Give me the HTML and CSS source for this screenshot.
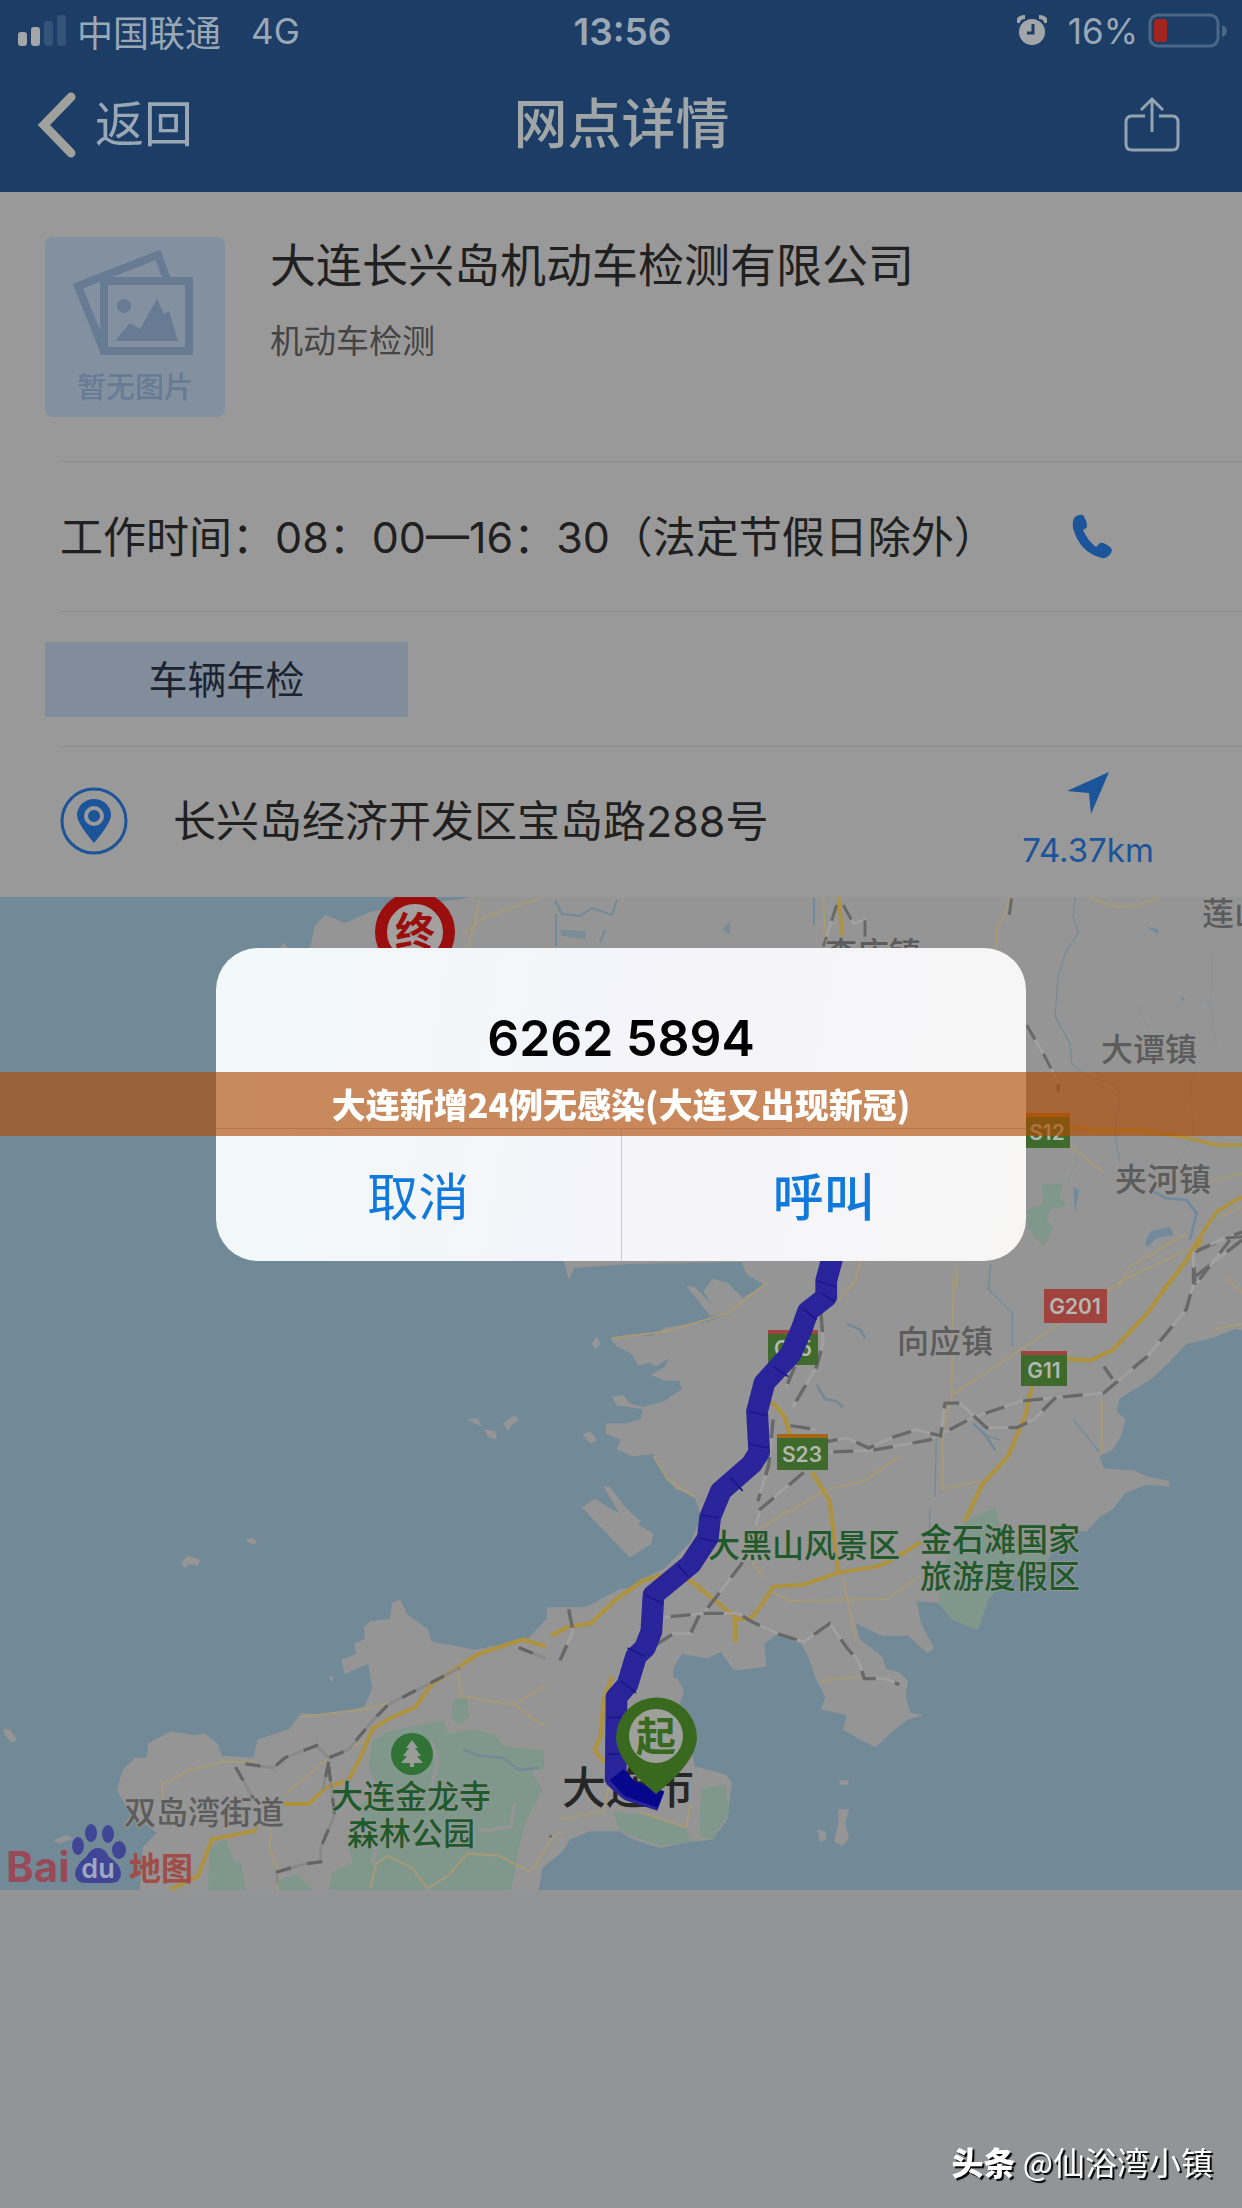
FILE: index.html
```html
<!DOCTYPE html>
<html lang="zh-CN">
<head>
<meta charset="utf-8">
<meta name="viewport" content="width=device-width, initial-scale=1">
<title>网点详情</title>
<link rel="stylesheet" href="styles.css">
</head>
<body>
<header class="header">
  <div class="status">
    <div class="status-side">
      <svg class="signal" viewBox="0 0 50 32" width="50" height="32" aria-hidden="true">
        <rect x="1" y="17" width="9" height="14" rx="3" fill="#a3a6a8"/>
        <rect x="14" y="12" width="9" height="19" rx="3" fill="#a3a6a8"/>
        <rect x="27" y="6" width="9" height="25" rx="3" fill="#345379"/>
        <rect x="40" y="0" width="9" height="31" rx="3" fill="#345379"/>
      </svg>
      <span class="carrier">中国联通</span>
      <span>4G</span>
    </div>
    <time class="clock">13:56</time>
    <div class="status-side status-right">
      <svg viewBox="0 0 30 32" width="30" height="32" aria-hidden="true">
        <circle cx="15" cy="17" r="13" fill="#a3a6a8"/>
        <path d="M1 8Q1 2 8 2M22 2Q29 2 29 8" fill="none" stroke="#a3a6a8" stroke-width="4"/>
        <path d="M16 9V18H10" fill="none" stroke="#1c3d66" stroke-width="3"/>
      </svg>
      <span>16%</span>
      <svg class="battery" viewBox="0 0 80 36" width="80" height="36" aria-hidden="true">
        <rect x="2" y="2" width="68" height="31" rx="8" fill="none" stroke="#4b6686" stroke-width="3"/>
        <rect x="6" y="6" width="13" height="23" rx="3" fill="#a4241f"/>
        <path d="M74 12Q79 14 79 18T74 24Z" fill="#4b6686"/>
      </svg>
    </div>
  </div>
  <nav class="nav">
    <button class="back" type="button">
      <svg viewBox="0 0 40 66" width="40" height="66" aria-hidden="true"><path d="M34 5L7 33L34 61" fill="none" stroke="#a0a09c" stroke-width="9" stroke-linecap="round" stroke-linejoin="miter"/></svg>
      <span>返回</span>
    </button>
    <h1 class="nav-title">网点详情</h1>
    <button class="share" type="button" aria-label="分享">
      <svg viewBox="0 0 56 58" width="56" height="58" aria-hidden="true"><path d="M21 20H8Q2 20 2 26V48Q2 54 8 54H48Q54 54 54 48V26Q54 20 48 20H35M28 36V3M17 14L28 3L39 14" fill="none" stroke="#93a1b1" stroke-width="3"/></svg>
    </button>
  </nav>
</header>

<main>
  <section class="summary">
    <div class="thumb">
      <svg viewBox="0 0 124 130" width="124" height="130" aria-hidden="true">
        <path d="M31 114L5 49L85 18L94 43" fill="none" stroke="#687b94" stroke-width="8"/>
        <rect x="31" y="44" width="85" height="70" fill="none" stroke="#687b94" stroke-width="8"/>
        <circle cx="51" cy="69" r="7" fill="#687b94"/>
        <path d="M42 104L57 86L67 92L84 62L91 77L96 74L105 104Z" fill="#687b94"/>
      </svg>
      <span>暂无图片</span>
    </div>
    <div class="summary-text">
      <h2>大连长兴岛机动车检测有限公司</h2>
      <p>机动车检测</p>
    </div>
  </section>

  <section class="row hours">
    <p class="row-text">工作时间：08：00—16：30（法定节假日除外）</p>
    <a class="action" href="tel:62625894" aria-label="呼叫">
      <svg viewBox="0 0 40 46" width="40" height="46" aria-hidden="true"><path d="M3 3Q7 0 11 1Q15 7 15 12Q15 14 11 16Q16 27 24 33L28 29Q31 28 38 33Q41 35 39 39Q35 45 30 44Q8 39 1 14Q0 6 3 3Z" fill="#1c5499"/></svg>
    </a>
  </section>

  <section class="row tags">
    <span class="tag">车辆年检</span>
  </section>

  <section class="row address">
    <svg class="pin" viewBox="0 0 68 68" width="68" height="68" aria-hidden="true">
      <circle cx="34" cy="34" r="32" fill="none" stroke="#1c5499" stroke-width="3"/>
      <path d="M34 56Q17 36 17 28A17 16 0 0 1 51 28Q51 36 34 56Z" fill="#1c5499"/>
      <circle cx="34" cy="29" r="8" fill="#1c5499" stroke="#999" stroke-width="4"/>
    </svg>
    <p class="row-text">长兴岛经济开发区宝岛路288号</p>
    <a class="action" href="#map">
      <svg viewBox="0 0 42 42" width="42" height="42" aria-hidden="true"><path d="M42 0L24 42L22 21L0 19Z" fill="#1c5499"/></svg>
      <span>74.37km</span>
    </a>
  </section>

  <svg id="map" class="map" viewBox="0 897 1242 993" role="img" aria-label="路线地图">
    <rect x="0" y="897" width="1242" height="993" fill="#728a98"/>
    <!-- northern land -->
    <path d="M310 948L315 925L325 915L345 923L370 912L400 905L455 900L470 897H1242V1330L745 1262L630 1264L574 1268L569 1280L564 1262L400 1100Z" fill="#959595"/>
    <path d="M280 948L283 943L288 948Z" fill="#959595"/>
    <!-- western peninsula -->
    <g transform="translate(0 1260) scale(.396 .408)">
      <path d="M353 1545L361 1438L396 1404L328 1355L295 1299L310 1250L340 1220L370 1220L375 1185L430 1155L490 1165L515 1160L550 1185L560 1215L640 1220L650 1175L730 1150L760 1110L830 1115L920 1095L940 1050L930 990L905 1000L870 1015L862 980L900 965L895 940L920 930L920 900L935 885L985 880L990 840L1010 832L1030 870L1080 905L1090 935L1200 955L1330 930L1400 860L1480 850L1568 805L1700 805V1400H1490L1440 1420L1420 1450L1370 1490L1360 1545Z" fill="#959595"/>
      <g fill="#959595">
        <path d="M458 740L475 725L505 735L500 750L480 745L465 755ZM620 688L635 680L650 690L640 698ZM1180 390L1205 388L1220 415L1250 420L1255 440L1235 435L1215 408ZM1270 400L1300 380L1310 392L1290 405L1285 420ZM1495 205L1505 188L1517 205L1503 217ZM1470 425L1500 430L1505 445L1485 445ZM8 1150L25 1150L42 1175L30 1183L12 1165ZM832 1020L842 1022L836 1035ZM135 1422L165 1410L185 1418L150 1430Z"/>
      </g>
      <g fill="#80988b">
        <path d="M940 1180L980 1155L1060 1140L1120 1128L1130 1160L1200 1150L1250 1165L1270 1190L1350 1200L1440 1210L1430 1245L1340 1250L1370 1300L1330 1370L1310 1440L1300 1500L1290 1545L830 1545L840 1500L890 1480L880 1430L930 1400L900 1340L960 1300L930 1240Z"/>
        <path d="M1145 1075L1180 1075L1185 1120L1160 1140L1140 1125Z"/>
        <path d="M530 1440L570 1420L590 1470L610 1480L620 1545L525 1545ZM700 1520L750 1505L790 1545H700Z"/>
      </g>
      <path d="M1090 1180L1105 1230L1090 1290M1210 1400L1290 1390L1300 1330M900 1400L950 1440L940 1480" fill="none" stroke="#959595" stroke-width="9"/>
      <path d="M1170 1200L1210 1215L1270 1220L1310 1250L1360 1245" fill="none" stroke="#728a98" stroke-width="6"/>
      <g fill="none" stroke="#a69a79" stroke-width="5">
        <path d="M410 1320V1285L480 1250L560 1230L640 1230M720 1310L830 1220L920 1180M1155 1000L1165 1070L1300 1090L1380 1040L1480 1010M1300 1090L1360 1135L1460 1155M1460 1155L1470 1230L1540 1260M935 1540L950 1480L980 1460L1040 1490L1080 1540L1130 1510L1180 1455L1260 1460L1340 1500L1400 1410L1568 1350M685 1390L680 1440L705 1500L700 1543M760 1120L930 1100L980 1085"/>
      </g>
      <path d="M430 1543L500 1510L535 1420L640 1400L650 1385M715 1333H780L820 1295L880 1275L910 1220L940 1150L980 1125L1050 1095L1090 1040L1210 965L1320 930L1380 948L1440 900L1495 890L1568 835M1568 1060L1545 1090L1540 1160L1500 1205L1530 1240" fill="none" stroke="#ad923f" stroke-width="10"/>
      <g fill="none" stroke="#898989" stroke-width="7">
        <path d="M595 1243L640 1320M620 1235L690 1245L720 1220L800 1190L830 1220L880 1200L940 1130L980 1090L1160 1000M830 1230L815 1300M830 1240L845 1360L810 1440V1475L770 1480L700 1500V1530M1440 855L1450 920L1425 980M1310 950L1400 985L1475 1015L1540 985M1475 1015L1460 1080L1420 1100M1460 1080L1470 1180L1520 1245M1480 1150L1510 1150M1500 1320L1440 1370L1390 1380V1415"/>
      </g>
      <g fill="none" stroke="#646464" stroke-width="8" stroke-dasharray="38 42">
        <path d="M595 1243L640 1320M620 1235L690 1245L720 1220L800 1190L830 1220L880 1200L940 1130L980 1090L1160 1000M830 1230L815 1300M830 1240L845 1360L810 1440V1475L770 1480L700 1500V1530M1440 855L1450 920L1425 980M1310 950L1400 985L1475 1015L1540 985M1475 1015L1460 1080L1420 1100M1500 1320L1440 1370L1390 1380V1415"/>
      </g>
    </g>
    <!-- eastern peninsula -->
    <g transform="translate(560 1240) scale(.435 .408)">
      <path d="M415 50L430 85L470 110L420 142L385 105L350 95L330 125L350 160L310 115L290 112L345 185L385 183L340 200L240 215L210 235L160 232L115 240L130 260L165 280L180 308L205 300L220 310L250 290L240 312L210 330L240 345L275 345L280 365L240 395L190 410L160 400L145 380L120 385L130 405L190 415L185 440L150 450L105 450V475L140 490L130 512L165 530L215 525L240 570L265 610L310 630L325 680L300 740L240 805L190 830L100 900L-30 900L-40 1460L60 1440L120 1440L170 1470L230 1490L300 1475L350 1470L385 1420L395 1330L380 1310L310 1290L300 1240L305 1200L275 1140L285 1105L270 1075L215 1065L260 1050L280 1015L340 1025L370 1010L400 1055L440 1050L475 1045L470 990L500 965L555 990L570 1020L590 1080L610 1120L600 1150L660 1165L650 1200L690 1225L725 1243L770 1200L800 1175L835 1165L805 1158L795 1120L800 1080L780 1060L750 1050L740 1020L690 980L680 940L740 970L800 970L845 1012L860 1000L830 940L820 885L870 890L900 930L960 955L985 880L1000 850L1120 790L1130 760L1180 710L1210 715L1240 680L1270 660L1300 620L1350 600L1400 605V590L1350 580L1320 565L1250 560L1240 530L1270 515L1290 480L1300 440L1280 420L1285 390L1360 340L1400 300L1440 255L1500 240L1570 210V50Z" fill="#959595"/>
      <path d="M50 655L80 635L215 720L210 745L160 778ZM100 605L115 605L150 655L185 690L175 705L140 675ZM75 250L88 240L92 255L80 268ZM52 475L70 470L85 490L70 498ZM640 1325L665 1325L660 1335H645ZM640 1395L665 1395L655 1430L665 1465L650 1485L630 1475L640 1430ZM592 1445L610 1450L613 1470L597 1475Z" fill="#959595"/>
      <g fill="#80988b">
        <path d="M930 690L1000 655L1010 700L1080 750L1130 770L1110 800L1010 850L985 880L960 955L900 930L870 890L880 800Z"/>
        <path d="M325 1345L380 1335L390 1400L350 1470L320 1460ZM120 1400L200 1410L290 1440L300 1475L230 1485L140 1450Z"/>
      </g>
      <g fill="none" stroke="#728a98" stroke-width="7">
        <path d="M660 205L690 220L702 240M590 355L610 390L635 395L650 410M950 450L980 480L1000 515" stroke-width="6"/>
        <path d="M865 480L862 630M850 660V710M1180 440L1240 520M980 480L1010 490M990 60L985 120L1040 180V260" stroke-width="3"/>
      </g>
      <g fill="none" stroke="#a69a79" stroke-width="5">
        <path d="M475 105L385 180L240 225L120 240M905 90L900 380L880 470V610L970 590M900 380L1100 240L1290 100L1450 20M780 530L700 590L620 610L500 680L440 720M480 860L530 885L750 880L820 830M650 830L680 980M600 1080L690 1070M1245 390V520M690 50L680 100L640 150M1500 220L1568 205M215 530L250 590L310 630M430 770L470 830M0 1420L100 1400L120 1300M180 1400L290 1440L300 1380M1568 130L1530 90"/>
      </g>
      <path d="M1475 0L1390 120L1350 180L1270 270L1220 295L1165 292M1085 360L1070 430L1030 530L970 600L930 690M830 740L770 780L730 800L640 815L560 845L490 850L460 900L440 925L410 930L300 835L240 820L190 835L130 880L70 940L20 948L-20 970M640 815L620 640L580 570M485 395L515 430L530 480M402 925V985M120 1070L100 1130L95 1210L80 1250L100 1280" fill="none" stroke="#ad923f" stroke-width="10"/>
      <g fill="none" stroke="#a0a0a0" stroke-width="7">
        <path d="M1568 0L1460 90L1440 170L1350 285L1250 375L1150 385L1060 395L950 435L850 490L720 515L620 520M1460 110L1455 30L1568 -20M1250 310L1270 340M1140 385L1090 440L1050 460H980L920 400L885 400L875 480L820 465L760 485L710 510L660 485L610 495M600 180L605 250L590 310L535 410M540 310L520 360M530 455L590 465M560 570L460 660L450 700M490 440L480 550L455 640M420 790L370 860L330 915L240 925M330 915L410 915L440 935L500 965L560 985L620 940L660 1000L685 1030L700 1075H750L780 1090M320 920L300 965L260 965L210 1000M20 905L30 960L0 1030"/>
      </g>
      <g fill="none" stroke="#686868" stroke-width="8" stroke-dasharray="46 46">
        <path d="M1568 0L1460 90L1440 170L1350 285L1250 375L1150 385L1060 395L950 435L850 490L720 515L620 520M1460 110L1455 30L1568 -20M1250 310L1270 340M1140 385L1090 440L1050 460H980L920 400L885 400L875 480L820 465L760 485L710 510L660 485L610 495M600 180L605 250L590 310L535 410M540 310L520 360M530 455L590 465M560 570L460 660L450 700M490 440L480 550L455 640M420 790L370 860L330 915L240 925M330 915L410 915L440 935L500 965L560 985L620 940L660 1000L685 1030L700 1075H750L780 1090M320 920L300 965L260 965L210 1000M20 905L30 960L0 1030"/>
      </g>
    </g>
    <!-- north-east detail -->
    <g transform="translate(820 890) scale(.3333)" fill="none">
      <path d="M765 20L760 80L775 130L735 190L715 260L705 380L750 460L755 520L800 560L880 580L900 610L885 740L900 815" stroke="#7d8b93" stroke-width="4"/>
      <path d="M1180 190L1170 330L1190 480M950 340L985 415M510 1120L500 1200M1110 540L1120 740L1070 820M780 780L745 870M1160 330L1180 390M1130 520L1120 560" stroke="#8b9195" stroke-width="3"/>
      <path d="M1000 905L1040 925L1100 930L1130 970L1110 1050" stroke="#7089a0" stroke-width="8"/>
      <path d="M978 110L1015 118L1016 134ZM975 1060L990 1025L1050 1010L1060 1035L1010 1045L985 1070ZM760 890L778 900L765 970ZM1080 320L1095 325L1090 335Z" fill="#728a9c"/>
      <path d="M620 960L670 940L665 885L730 880L720 920L740 945L690 960L680 990L700 1010L670 1070L620 1010Z" fill="#80988b"/>
      <path d="M810 20Q900 80 1020 20M570 20L550 85L530 110V180M10 20L15 180M630 740L750 770L850 845M1266 850L1150 880M890 1200L930 1130L1100 1030M410 1130V1200M1266 950L1200 980" stroke="#a69a79" stroke-width="6"/>
      <path d="M55 20L68 140M750 710L830 722L960 720L1110 745L1190 765H1266M1266 920L1190 965L1140 1040L1100 1110L1030 1200" stroke="#ad923f" stroke-width="11"/>
      <path d="M50 45L10 170M70 45L100 100L135 90V140M575 25L568 75M620 405L675 500L715 580V605M1266 1040L1210 1045L1120 1090V1200M1230 1050L1130 1180" stroke="#a2a2a2" stroke-width="8"/>
      <path d="M50 45L10 170M70 45L100 100L135 90V140M575 25L568 75M620 405L675 500L715 580V605M1266 1040L1210 1045L1120 1090V1200M1230 1050L1130 1180" stroke="#686868" stroke-width="9" stroke-dasharray="50 50"/>
    </g>
    <g fill="none" stroke="#728a98" stroke-width="2">
      <path d="M555 900L562 914L580 916L592 908L612 915L617 900M556 914V946M605 930L600 942M814 898V925"/>
    </g>
    <path d="M560 930L585 931L586 939L562 936ZM722 930L730 921V934Z" fill="#7a8c96"/>
    <path d="M462 935L485 917L540 898M480 900L468 948" fill="none" stroke="#a69a79" stroke-width="2"/>

    <g class="place">
      <text x="1202" y="925">莲山</text>
      <text x="825" y="965">李店镇</text>
      <text x="1101" y="1061">大谭镇</text>
      <text x="1115" y="1191">夹河镇</text>
      <text x="897" y="1353">向应镇</text>
      <text x="124" y="1824">双岛湾街道</text>
    </g>
    <g class="place park">
      <text x="708" y="1557">大黑山风景区</text>
      <text x="920" y="1551">金石滩国家</text>
      <text x="920" y="1588">旅游度假区</text>
      <text x="331" y="1808">大连金龙寺</text>
      <text x="347" y="1845">森林公园</text>
    </g>
    <text class="city" x="562" y="1804">大连市</text>
    <g class="road">
      <rect x="1044" y="1289" width="63" height="34" fill="#a0433f"/><text x="1075" y="1314">G201</text>
      <rect x="1021" y="1352" width="46" height="34" fill="#3e6a2c"/><rect x="1021" y="1351" width="46" height="4" fill="#a0433f"/><text x="1044" y="1378">G11</text>
      <rect x="768" y="1331" width="50" height="34" fill="#3e6a2c"/><rect x="768" y="1330" width="50" height="4" fill="#a0433f"/><text x="793" y="1356">G15</text>
      <rect x="777" y="1436" width="51" height="34" fill="#3e6a2c"/><rect x="777" y="1434" width="51" height="4" fill="#a76518"/><text x="802" y="1462">S23</text>
      <rect x="1022" y="1114" width="48" height="34" fill="#3e6a2c"/><rect x="1022" y="1113" width="48" height="4" fill="#a76518"/><text x="1047" y="1140">S12</text>
    </g>

    <g transform="translate(560 1240) scale(.435 .408)" fill="none" stroke-linejoin="round">
      <path d="M632 20L612 100V140L570 175L555 220L530 280L470 350L453 420L458 520L440 550L370 615L345 680L340 730L300 795L215 870L210 960L195 1000L175 1020L155 1090L130 1120L128 1320L160 1350L232 1375" stroke="#29249a" stroke-width="50"/>
      <path d="M130 1310L160 1345L232 1372" stroke="#07078c" stroke-width="42"/>
      <path d="M590 100L635 115M600 130L630 150M560 170L590 195M490 310L525 335M435 420L475 430M435 500L480 510M390 580L420 615M325 675L365 680M320 730L360 740M270 795L295 825M195 870L235 890M155 1000L195 1020M140 1080L175 1110M110 1170H150M110 1260H150" stroke="#1c1789" stroke-width="4"/>
    </g>

    <circle cx="415" cy="932" r="34" fill="#a5a0a0" stroke="#9a0f0d" stroke-width="12"/>
    <text class="marker end" x="415" y="946">终</text>
    <path d="M656 1794Q617 1762 616 1738A40 40 0 0 1 697 1738Q696 1762 656 1794Z" fill="#39691f"/>
    <circle cx="656" cy="1736" r="27" fill="#9ea09c"/>
    <text class="marker start" x="656" y="1751">起</text>

    <circle cx="412" cy="1754" r="21" fill="#317236"/>
    <path d="M412 1740L418 1748H415L421 1756H417L423 1763H414V1767H410V1763H401L407 1756H403L409 1748H406Z" fill="#999c98"/>

    <text class="logo-bai" x="6" y="1882">Bai</text>
    <g fill="#404596">
      <ellipse cx="78" cy="1846" rx="6" ry="9"/><ellipse cx="91" cy="1833" rx="6" ry="9"/><ellipse cx="108" cy="1834" rx="6" ry="9"/><ellipse cx="119" cy="1850" rx="7" ry="9"/>
      <path d="M98 1848Q105 1848 109 1857Q120 1864 121 1873Q121 1883 111 1883H86Q75 1883 75 1873Q76 1865 86 1857Q91 1848 98 1848Z"/>
    </g>
    <text class="logo-du" x="98" y="1878">du</text>
    <text class="logo-map" x="129" y="1880">地图</text>
  </svg>
</main>

<div class="scrim">
  <div class="dialog" role="alertdialog" aria-modal="true" aria-labelledby="number">
    <p class="number" id="number">6262 5894</p>
    <div class="buttons">
      <button type="button">取消</button>
      <button class="call" type="button">呼叫</button>
    </div>
  </div>
</div>
<div class="banner">大连新增24例无感染(大连又出现新冠)</div>
<p class="watermark"><strong>头条</strong> <span>@仙浴湾小镇</span></p>
</body>
</html>
```
FILE: styles.css
```css
* { box-sizing: border-box; }
body {
  margin: 0;
  min-height: 100vh;
  position: relative;
  background: #939495;
  color: #202020;
  font-family: Inter, "Noto Sans CJK SC", sans-serif;
}
h1, h2, p { margin: 0; font-weight: 400; }
button { margin: 0; padding: 0; border: 0; background: none; font: inherit; color: inherit; cursor: pointer; }
a { color: inherit; text-decoration: none; }
svg { display: block; flex: none; }

.header { background: #1c3d66; color: #9aa8b6; }
.status {
  display: grid;
  grid-template-columns: 1fr auto 1fr;
  align-items: center;
  height: 62px;
  padding: 0 14px 0 17px;
  font-size: 35px;
}
.status-side { display: flex; align-items: center; gap: 10px; }
.status-right { justify-content: flex-end; }
.status-right span { margin-left: 11px; }
.carrier { margin-right: 20px; font-size: 36px; }
.clock { font-weight: 600; font-size: 37px; }
.nav {
  display: grid;
  grid-template-columns: 1fr auto 1fr;
  align-items: center;
  height: 130px;
  padding: 0 62px 4px 37px;
}
.back { display: flex; align-items: center; gap: 18px; justify-self: start; font-size: 49px; line-height: 66px; }
.nav-title { padding-left: 26px; font-size: 54px; line-height: 74px; font-weight: 500; color: #a0a5a8; }
.share { justify-self: end; }

main { background: #999; }
.summary {
  display: flex;
  gap: 45px;
  height: 269px;
  padding: 45px 45px 0;
}
.thumb {
  display: flex;
  flex-direction: column;
  align-items: center;
  width: 180px;
  height: 180px;
  border-radius: 8px;
  background: #8290a0;
  color: #687b94;
  font-size: 29px;
  font-weight: 500;
  line-height: 42px;
}
.summary h2 { font-size: 46px; line-height: 56px; }
.summary-text p { margin-top: 24px; font-size: 33px; line-height: 48px; color: #444; }

.row {
  display: flex;
  align-items: center;
  min-height: 150px;
  margin-left: 60px;
  padding-right: 54px;
  border-top: 1px solid #8c8c8c;
}
.row-text { flex: 1; font-size: 43px; line-height: 56px; white-space: nowrap; }
.action {
  display: flex;
  flex-direction: column;
  align-items: center;
  gap: 16px;
  width: 200px;
  color: #1c5499;
  font-size: 33px;
  line-height: 40px;
}
.tags { min-height: 135px; }
.tag {
  width: 363px;
  margin-left: -15px;
  background: #828d9b;
  color: #1b2330;
  font-size: 39px;
  line-height: 75px;
  text-align: center;
}
.address { gap: 45px; min-height: 151px; padding-bottom: 2px; }

.map { width: 100%; height: auto; }
.place { font-size: 32px; font-weight: 500; fill: #5c5c5c; stroke: #959595; stroke-width: 2; paint-order: stroke; }
.park { fill: #1f5a2a; }
.city { font-size: 44px; font-weight: 500; fill: #262626; }
.road { font-size: 21px; font-weight: 600; fill: #b4b8b0; text-anchor: middle; }
.marker { font-weight: 700; font-size: 40px; text-anchor: middle; }
.end { fill: #9a0f0d; }
.start { fill: #39691f; }
.logo-bai { font-size: 42px; font-weight: 700; fill: #984a58; }
.logo-du { font-size: 27px; font-weight: 600; fill: #9fa8c0; text-anchor: middle; }
.logo-map { font-size: 32px; font-weight: 700; fill: #a04d48; }

.scrim { position: fixed; inset: 0; display: grid; place-items: center; }
.dialog {
  width: 810px;
  max-width: 90%;
  overflow: hidden;
  border-radius: 42px;
  background: linear-gradient(100deg, #f2f9f8, #f4f4fa 50%, #f7f6f5);
}
.number { font-size: 50px; font-weight: 600; line-height: 180px; text-align: center; color: #000; }
.buttons { display: flex; border-top: 1px solid #c5c7cb; }
.buttons button { flex: 1; height: 132px; padding-bottom: 2px; font-size: 51px; color: #1179db; }
.buttons .call { border-left: 1px solid #c5cbdb; font-weight: 500; }
.banner {
  position: fixed;
  inset: 50% 0 auto;
  margin-top: -32px;
  background: rgba(175, 75, 3, .64);
  color: #fff;
  font: 900 34px/64px "Noto Sans CJK SC", sans-serif;
  text-align: center;
}
.watermark {
  position: absolute;
  right: 29px;
  bottom: 24px;
  color: #fff;
  font-family: "Noto Sans CJK SC", sans-serif;
  font-size: 32px;
  line-height: 46px;
  text-shadow: 2px 2px 1px #000;
}
.watermark strong { font-weight: 900; }
```
